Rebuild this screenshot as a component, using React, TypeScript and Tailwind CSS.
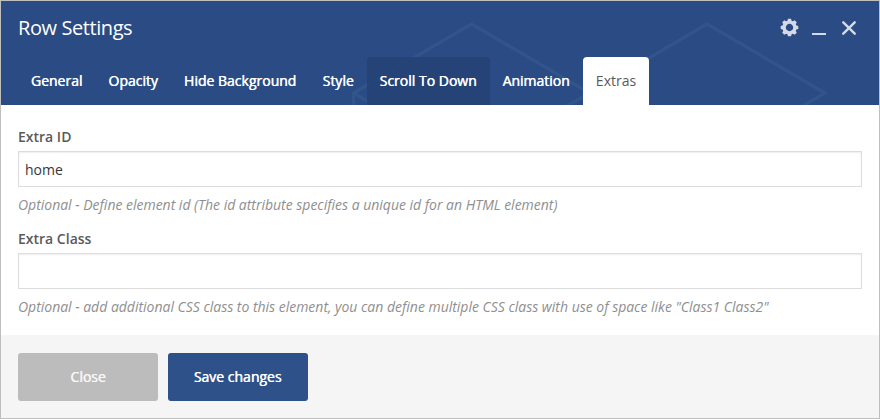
import React from "react";

const tabs = [
  { label: "General", box: "w-[77px]" },
  { label: "Opacity", box: "w-[76px]" },
  { label: "Hide Background", box: "w-[138px]" },
  { label: "Style", box: "w-[58px]" },
  { label: "Scroll To Down", box: "w-[123px] pr-px", hovered: true },
  { label: "Animation", box: "w-[93px] pr-px" },
  { label: "Extras", box: "w-[66px]", active: true },
];

function HeaderPattern() {
  return (
    <svg className="pointer-events-none absolute inset-0" width="878" height="104" fill="none" stroke="#31548b" strokeWidth="3.5">
      <path d="M352.500 120V92L470.500 23L588.500 92L530 126M352.500 92L412 127" />
      <path d="M588.500 92L706 23L824 92L764 127M588.500 92L648 127" />
    </svg>
  );
}

function GearIcon() {
  return (
    <svg width="18" height="18" viewBox="-9.500 -8.500 18 18" className="block overflow-visible">
      <circle cx="0" cy="0" r="5.400" fill="none" stroke="#d4dbe7" strokeWidth="3.400" />
      <g fill="#d4dbe7">
        {[0, 45, 90, 135, 180, 225, 270, 315].map((angle) => (
          <path key={angle} d="M-2.300-6L-1.500-8.800H1.500L2.300-6Z" transform={`rotate(${angle})`} />
        ))}
      </g>
    </svg>
  );
}

function Field({ label, value, hint }: { label: string; value: string; hint: string }) {
  return (
    <div className="h-[102px]">
      <label className="block h-[24px] text-[14px] leading-[20px] font-semibold text-[#5a5a5a]">{label}</label>
      <input
        readOnly
        aria-label={label}
        value={value}
        className="block h-[36px] w-full border border-[#dddddd] bg-white px-[6px] text-[14px] text-[#32373c] shadow-[inset_0_1px_2px_rgba(0,0,0,0.07)] outline-none"
      />
      <p className="mt-[8px] text-[14px] leading-[20px] tracking-[-0.015px] whitespace-nowrap text-[#8f8f8f] italic">{hint}</p>
    </div>
  );
}

export default function App() {
  return (
    <div className="flex h-[419px] w-[880px] flex-col overflow-hidden border border-[#bfbfbf] bg-white font-['Open_Sans',sans-serif]">
      <header className="relative flex h-[104px] shrink-0 flex-col justify-between overflow-hidden bg-[#2a4b83]">
        <HeaderPattern />
        <div className="relative flex h-[54px] items-center justify-between pr-[23px] pl-[17px]">
          <h1 className="text-[20px] leading-[28px] tracking-[-0.42px] text-white">Row Settings</h1>
          <div className="flex items-center">
            <button aria-label="Settings"><GearIcon /></button>
            <button aria-label="Minimize" className="mt-[12px] ml-[14px] h-[2px] w-[14px] bg-[#d4dbe7]" />
            <button aria-label="Close panel" className="ml-[16px]">
              <svg width="14" height="14" viewBox="0 0 14 14" className="block" stroke="#d4dbe7" strokeWidth="2.400" strokeLinecap="round">
                <path d="M1.300 1.300L12.700 12.700M12.700 1.300L1.300 12.700" />
              </svg>
            </button>
          </div>
        </div>
        <nav className="relative flex h-[48px] pl-[17px]">
          {tabs.map((tab) => (
            <button
              key={tab.label}
              className={`${tab.box} h-[48px] rounded-t-[4px] text-center text-[14px] leading-[48px] whitespace-nowrap ${
                tab.active ? "bg-white text-[#5a5a5a]" : "text-white [text-shadow:0.5px_0_0_white]"
              } ${tab.hovered ? "bg-[#254274]/90" : ""}`}
            >
              {tab.label}
            </button>
          ))}
        </nav>
      </header>
      <main className="flex h-[230px] shrink-0 flex-col px-[17px] pt-[22px]">
        <Field label="Extra ID" value="home" hint="Optional - Define element id (The id attribute specifies a unique id for an HTML element)" />
        <Field
          label="Extra Class"
          value=""
          hint={'Optional - add additional CSS class to this element, you can define multiple CSS class with use of space like "Class1 Class2"'}
        />
      </main>
      <footer className="flex flex-1 gap-[10px] bg-[#f5f5f5] px-[17px] pt-[18px] text-[14px] text-white">
        <button className="h-[48px] w-[140px] rounded-[3px] bg-[#bcbcbc] pb-[2px] [text-shadow:0.5px_0_0_white]">
          <span className="opacity-90">Close</span>
        </button>
        <button className="h-[48px] w-[140px] rounded-[3px] bg-[#2d5188] pr-px pb-[2px] [text-shadow:0.5px_0_0_white]">Save changes</button>
      </footer>
    </div>
  );
}
